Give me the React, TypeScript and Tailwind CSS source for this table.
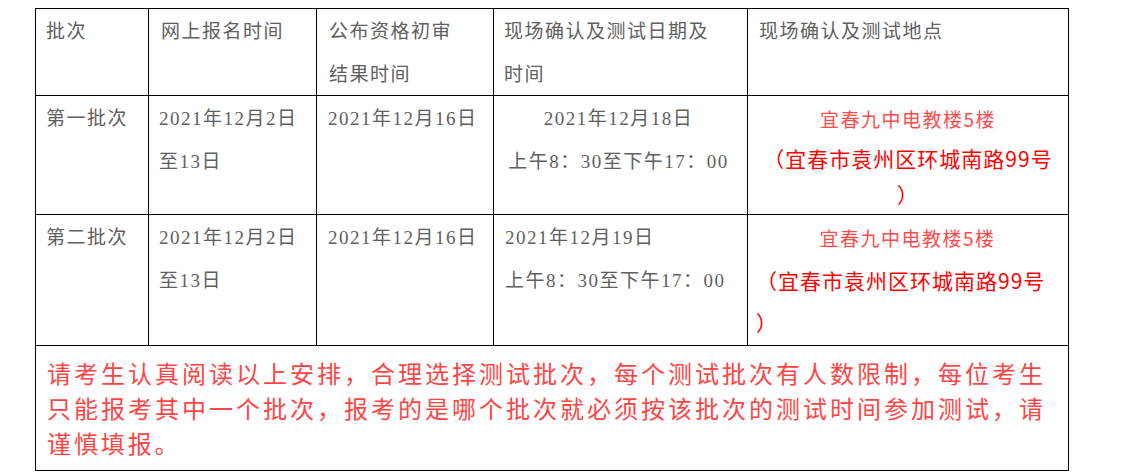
import React from 'react';

const grayText =
  "pt-px font-['Liberation_Serif','Noto_Sans_CJK_SC',serif] text-[19px] leading-[43px] tracking-[1.5px] text-[#606060] whitespace-nowrap";

const Cell: React.FC<{ className?: string; children?: React.ReactNode }> = ({ className = '', children }) => (
  <div className={`border-r border-b border-black ${className}`}>{children}</div>
);

const Address: React.FC<{ centered?: boolean }> = ({ centered }) => (
  <div className="font-['Noto_Sans_CJK_SC',sans-serif] whitespace-nowrap [text-spacing-trim:space-all]">
    <div className="text-center text-[19px] leading-[43px] tracking-[1.5px] text-[#ff4d4d]">宜春九中电教楼5楼</div>
    <div
      className={
        centered
          ? 'text-center text-[21px] leading-[36px] tracking-[1px] text-[#ff0000]'
          : 'text-left text-[21px] leading-[42px] tracking-[1px] text-[#ff0000]'
      }
    >
      （宜春市袁州区环城南路99号
      <br />）
    </div>
  </div>
);

const App: React.FC = () => {
  return (
    <div className="w-[1130px] h-[472px] bg-white pl-[35px] pt-[8px] overflow-hidden">
      <div className="grid w-fit grid-cols-[113px_168px_177px_254px_321px] grid-rows-[87px_119px_131px_125px] border-l border-t border-black">
        {/* header */}
        <Cell className={`pl-[10px] ${grayText}`}>批次</Cell>
        <Cell className={`pl-[12px] ${grayText}`}>网上报名时间</Cell>
        <Cell className={`pl-[12px] ${grayText}`}>
          公布资格初审
          <br />
          结果时间
        </Cell>
        <Cell className={`pl-[10px] ${grayText}`}>
          现场确认及测试日期及
          <br />
          时间
        </Cell>
        <Cell className={`pl-[11px] ${grayText}`}>现场确认及测试地点</Cell>

        {/* first batch */}
        <Cell className={`pl-[10px] ${grayText}`}>第一批次</Cell>
        <Cell className={`pl-[10px] ${grayText}`}>
          2021年12月2日
          <br />
          至13日
        </Cell>
        <Cell className={`pl-[11px] ${grayText}`}>2021年12月16日</Cell>
        <Cell className={`text-center pr-[4px] ${grayText}`}>
          2021年12月18日
          <br />
          上午8：30至下午17：00
        </Cell>
        <Cell className="pt-px px-[10px]">
          <Address centered />
        </Cell>

        {/* second batch */}
        <Cell className={`pl-[10px] ${grayText}`}>第二批次</Cell>
        <Cell className={`pl-[10px] ${grayText}`}>
          2021年12月2日
          <br />
          至13日
        </Cell>
        <Cell className={`pl-[11px] ${grayText}`}>2021年12月16日</Cell>
        <Cell className={`pl-[11px] ${grayText}`}>
          2021年12月19日
          <br />
          上午8：30至下午17：00
        </Cell>
        <Cell className="pt-px pl-[8px] pr-[9px]">
          <Address />
        </Cell>

        {/* note */}
        <Cell className="col-span-5 pl-[11px] pr-[22px] pt-[9px] font-['Noto_Sans_CJK_SC',sans-serif] text-[24px] leading-[35px] tracking-[2.9px] text-[#ff4545] whitespace-nowrap">
          <div className="text-justify [text-align-last:justify]">
            请考生认真阅读以上安排，合理选择测试批次，每个测试批次有人数限制，每位考生
          </div>
          <div className="text-justify [text-align-last:justify]">
            只能报考其中一个批次，报考的是哪个批次就必须按该批次的测试时间参加测试，请
          </div>
          <div>谨慎填报。</div>
        </Cell>
      </div>
    </div>
  );
};

export default App;
